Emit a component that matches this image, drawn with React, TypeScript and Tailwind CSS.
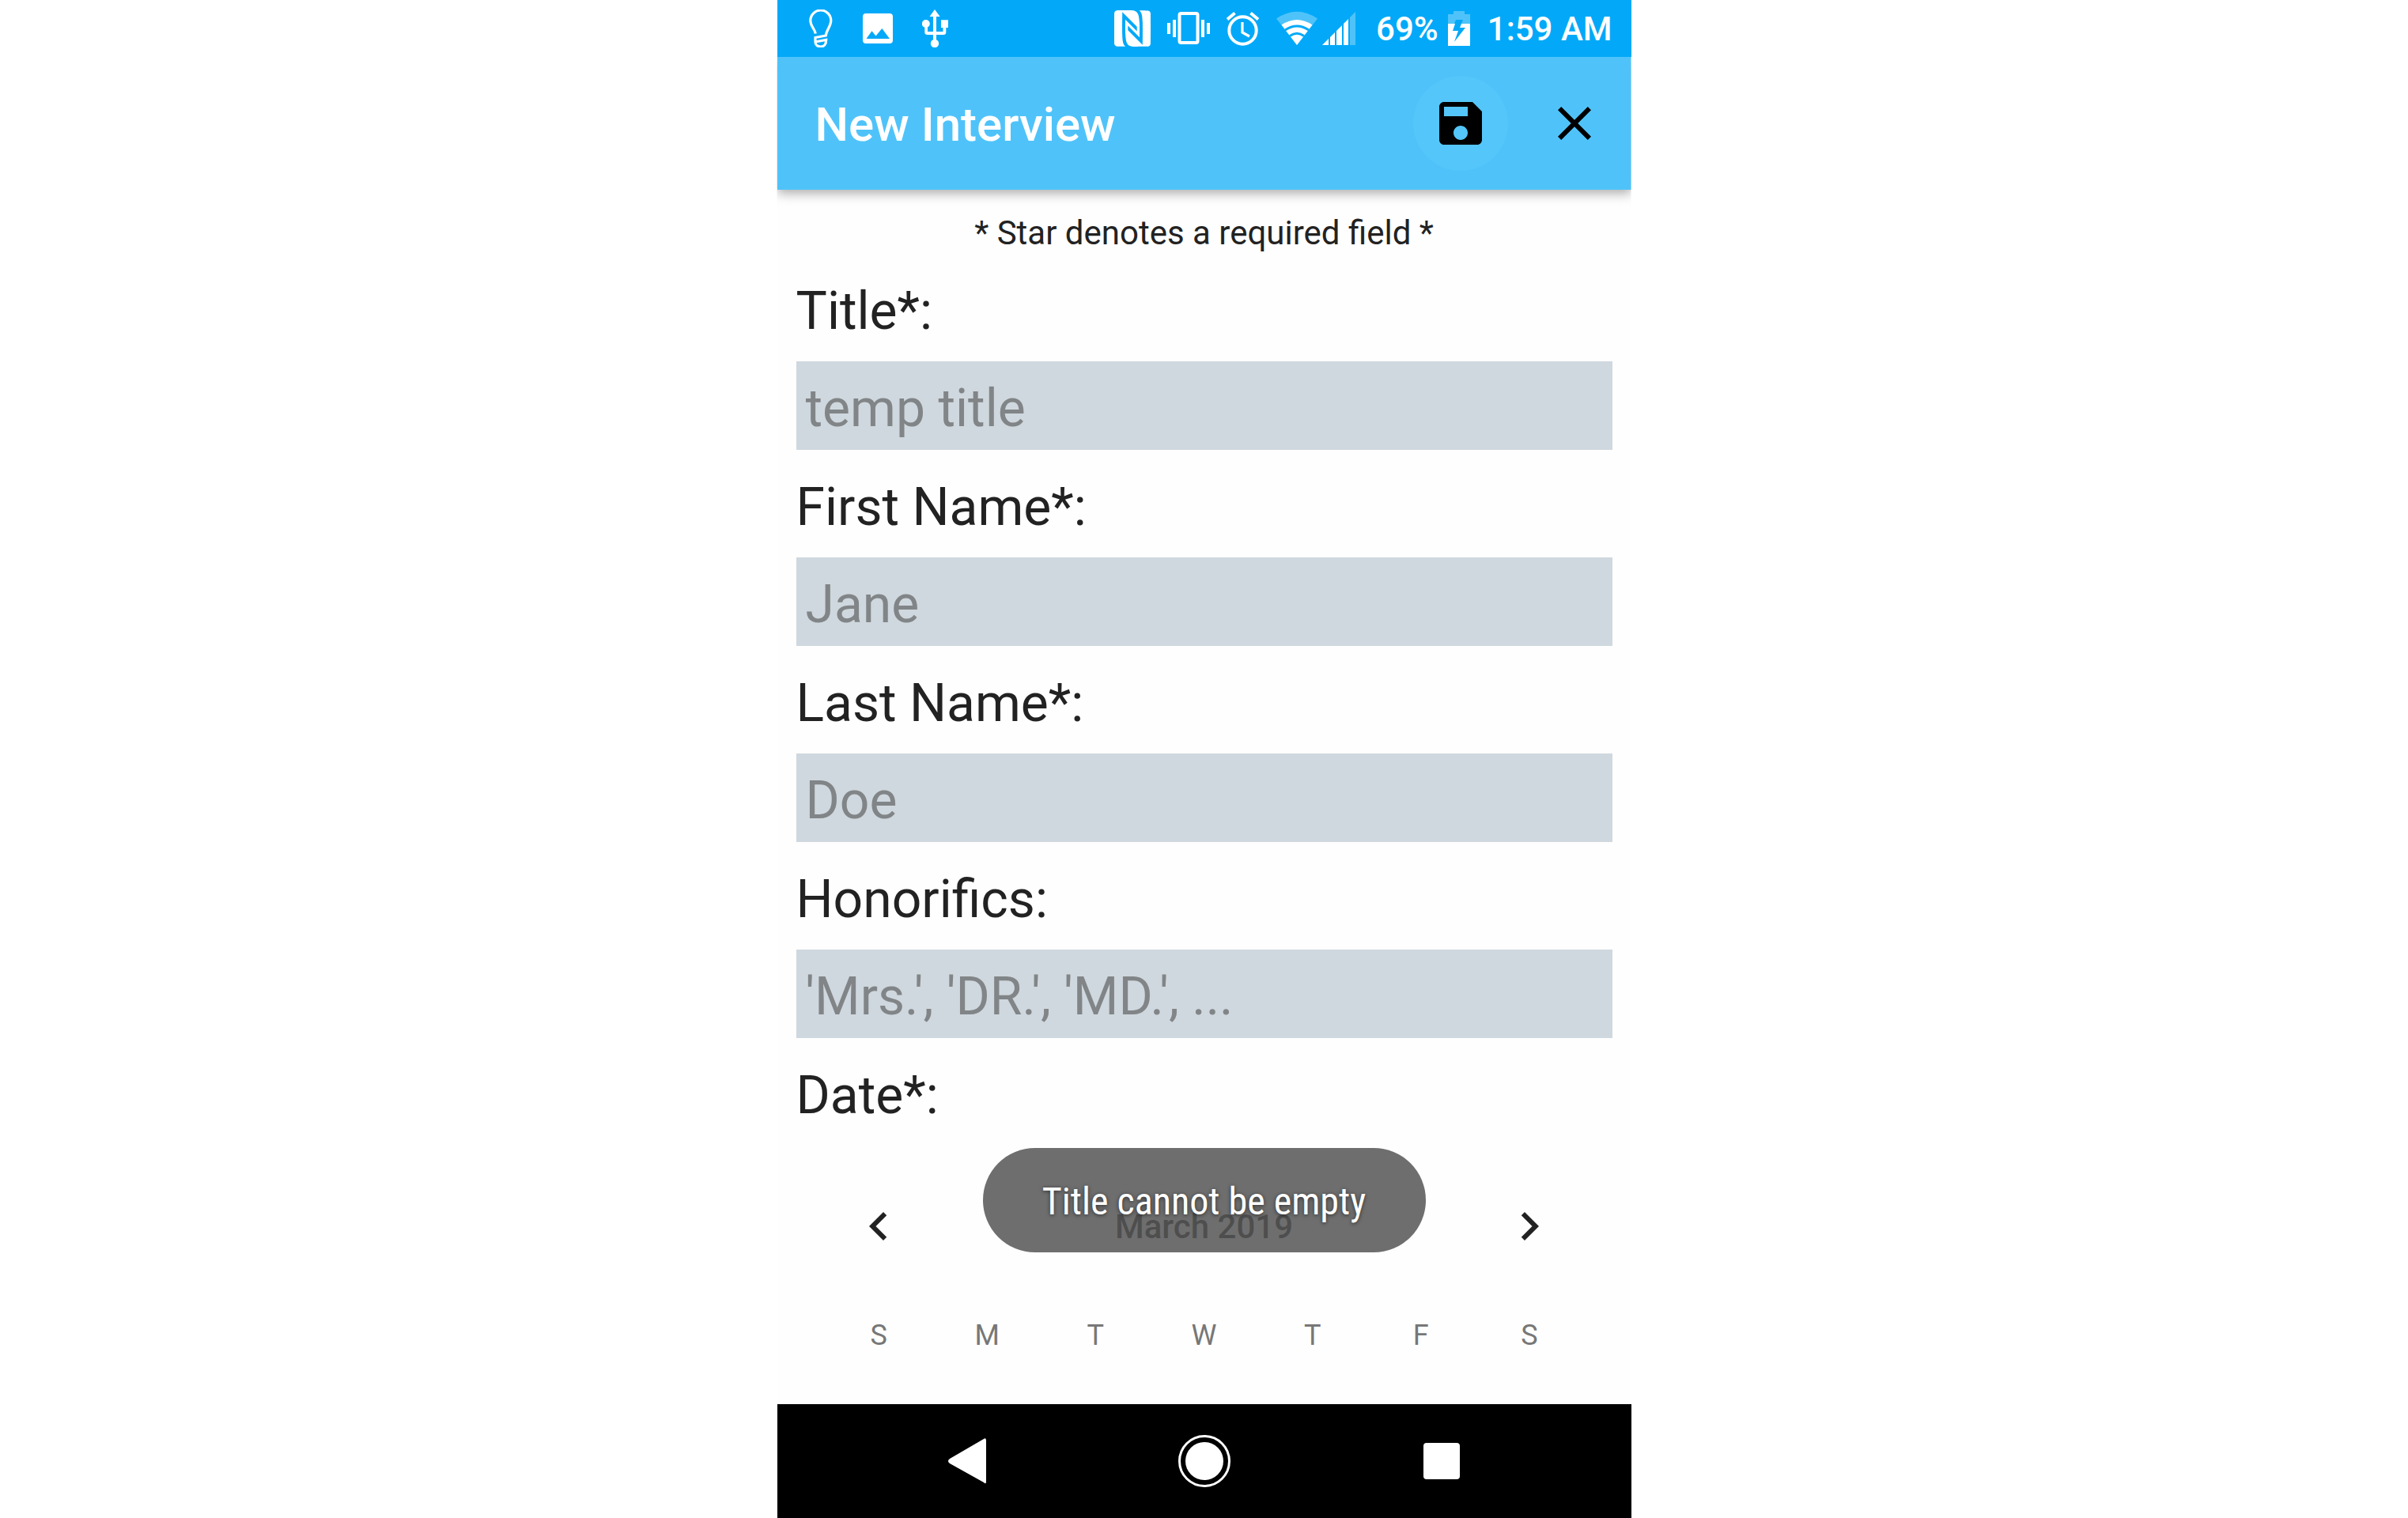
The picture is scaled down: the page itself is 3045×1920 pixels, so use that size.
import { useState } from "react";
import { SiNfc } from "react-icons/si";

const fields = [
  { id: "title", label: "Title*:", hint: "temp title" },
  { id: "first", label: "First Name*:", hint: "Jane" },
  { id: "last", label: "Last Name*:", hint: "Doe" },
  { id: "honorifics", label: "Honorifics:", hint: "'Mrs.', 'DR.', 'MD.', ..." },
];
const weekdays = ["S", "M", "T", "W", "T", "F", "S"];

function Status() {
  return (
    <div className="flex h-[72px] items-center bg-[#03a9f8] pr-6 pl-10 text-[42px] leading-none font-medium text-white">
      <div className="flex flex-1 gap-9">
        <svg className="h-12 w-[31px]" viewBox="0 0 31 48" fill="none" stroke="currentColor" strokeWidth="3.2">
          <path d="M8.3 30.5C7.5 25 1.8 21 1.8 14A13 13 0 0 1 27.8 14C27.8 21 22 26 21.3 33L8 35.5V41C8 45 11 47 15 47C19 47 21.7 44 21.7 38.5L9 40.8" />
        </svg>
        <svg className="h-12 w-10" viewBox="0 0 40 48" fill="currentColor">
          <path fillRule="evenodd" d="M5 5H35Q39 5 39 9V39Q39 43 35 43H5Q1 43 1 39V9Q1 5 5 5ZM5.5 37H35L25.3 24L17.5 33.5L12.5 27.3Z" />
        </svg>
        <svg className="h-12 w-[34px]" viewBox="0 0 34 48" fill="currentColor">
          <path d="M16 0L22.7 9H18V28H26.5V23H24V13.3H33V23H30.3V29Q30.3 32 27 32H18V40H14V32H7Q3.3 32 3.3 29V20H7V28H14V9H9.5Z" />
          <circle cx="4.8" cy="18" r="5" />
          <circle cx="16" cy="43" r="5.2" />
        </svg>
      </div>
      <div className="flex items-center gap-[21px]">
        <SiNfc className="size-[46px]" />
        <svg className="h-12 w-[54px]" viewBox="0 0 54 48" fill="currentColor">
          <path d="M0 17H4V31H0ZM7 13H11V35H7ZM43 13H47V35H43ZM50 17H54V31H50Z" />
          <rect x="15.5" y="5" width="23" height="37" rx="2" fill="none" stroke="currentColor" strokeWidth="4" />
        </svg>
        <svg className="h-12 w-[42px]" viewBox="0 0 42 48" fill="none" stroke="currentColor" strokeWidth="4">
          <circle cx="20.5" cy="26.5" r="17.2" />
          <path d="M1 12.5L10.5 4.5M40 12.5L30.5 4.5" />
          <path d="M20 16V29L29 34" strokeWidth="3.2" />
        </svg>
        <div className="flex gap-1.5">
          <svg className="h-12 w-[52px]" viewBox="0 0 52 48" fill="currentColor">
            <path fill="#4fc3f9" d="M0 11.5Q26-6 52 11.5L26 45Z" />
            <path d="M6.5 19.5Q26 6.5 45.5 19.5L26 45Z" />
            <path d="M11 26Q26 16 41 26M17 33.5Q26 27 35 33.5" fill="none" stroke="#03a9f8" strokeWidth="3" />
          </svg>
          <svg className="h-12 w-[42px]" viewBox="0 0 42 48" fill="currentColor">
            <path fill="#4fc3f9" d="M35 10L42 3V45H35Z" />
            <path d="M0 45L8 37V45ZM10 35L16 29V45H10ZM18 27L25 20V45H18ZM27 18L33 12V45H27Z" />
          </svg>
        </div>
      </div>
      <span className="ml-[26px] pt-0.5">69%</span>
      <svg className="mr-[22px] ml-3 h-12 w-7" viewBox="0 0 28 48" fill="currentColor">
        <path fill="#4fc3f9" d="M7 2H21V6H28V18H17L19 13H10L8 18H0V6H7Z" />
        <path d="M0 18H9L6 27H13L8 41L22 23H15L17 18H28V46H0Z" />
      </svg>
      <span className="pt-0.5">1:59 AM</span>
    </div>
  );
}

export default function App() {
  const [values, setValues] = useState<Record<string, string>>({});
  return (
    <div className="flex min-h-screen justify-center bg-white font-['Roboto',sans-serif] text-[#222]">
      <div className="relative flex w-full max-w-[1080px] flex-col bg-[#fefefe]">
        <Status />
        <header className="flex h-[168px] items-center bg-[#4fc3f9] pl-12 shadow-[0_4px_14px_rgba(0,0,0,0.35)] [clip-path:inset(0_0_-20px_0)]">
          <h1 className="flex-1 pt-1 text-[60px] leading-[72px] font-medium text-white">New Interview</h1>
          <button aria-label="Save" className="mx-3 flex size-[120px] items-center justify-center rounded-full bg-[#54c6f9] text-black">
            <svg className="size-[72px]" viewBox="0 0 24 24" fill="currentColor">
              <path d="M17 3H5c-1.11 0-2 .9-2 2v14c0 1.1.89 2 2 2h14c1.1 0 2-.9 2-2V7l-4-4zm-5 16c-1.66 0-3-1.34-3-3s1.34-3 3-3 3 1.34 3 3-1.34 3-3 3zm3-10H5V5h10v4z" />
            </svg>
          </button>
          <button aria-label="Close" className="mx-3 flex size-[120px] items-center justify-center text-black">
            <svg className="size-[72px]" viewBox="0 0 24 24" fill="currentColor">
              <path d="M19 6.41L17.59 5 12 10.59 6.41 5 5 6.41 10.59 12 5 17.59 6.41 19 12 13.41 17.59 19 19 17.59 13.41 12z" />
            </svg>
          </button>
        </header>
        <main className="flex-1">
          <form className="px-6 pt-[25px]">
            <p className="text-center text-[42px] leading-[60px]">* Star denotes a required field *</p>
            {fields.map((f) => (
              <div key={f.id} className="pb-1">
                <label htmlFor={f.id} className="block pt-[25px] pb-[19px] text-[66px] leading-[88px]">
                  {f.label}
                </label>
                <input
                  id={f.id}
                  value={values[f.id] ?? ""}
                  onChange={(e) => setValues({ ...values, [f.id]: e.target.value })}
                  placeholder={f.hint}
                  className="block h-28 w-full bg-[#cfd8de] px-3 pt-1.5 text-[66px] outline-none placeholder:text-[#818587]"
                />
              </div>
            ))}
            <p className="pt-[25px] text-[66px] leading-[88px]">Date*:</p>
          </form>
          <section aria-label="Calendar" className="mt-12 px-15">
            <div className="flex h-[146px] items-center justify-between">
              <button type="button" aria-label="Previous month" className="flex w-[137px] justify-center">
                <svg className="size-[72px]" viewBox="0 0 24 24" fill="currentColor">
                  <path d="M15.41 7.41L14 6l-6 6 6 6 1.41-1.41L10.83 12z" />
                </svg>
              </button>
              <h2 className="text-[42px] font-medium">March 2019</h2>
              <button type="button" aria-label="Next month" className="flex w-[137px] justify-center">
                <svg className="size-[72px]" viewBox="0 0 24 24" fill="currentColor">
                  <path d="M10 6L8.59 7.41 13.17 12l-4.58 4.59L10 18l6-6z" />
                </svg>
              </button>
            </div>
            <div className="grid h-[130px] grid-cols-7 items-center text-center text-[36px] text-[#777]">
              {weekdays.map((d, i) => (
                <span key={i}>{d}</span>
              ))}
            </div>
          </section>
        </main>
        <div role="alert" className="absolute bottom-[336px] left-1/2 flex h-[132px] w-[560px] -translate-x-1/2 items-center justify-center rounded-full bg-[#565656]/86 pt-1 font-['Roboto_Condensed','Roboto',sans-serif] text-[48px] whitespace-nowrap text-white [text-shadow:0_1px_5px_rgba(0,0,0,0.6)]">
          Title cannot be empty
        </div>
        <nav className="flex h-36 items-center justify-center bg-black text-white">
          <button aria-label="Back" className="flex w-[300px] justify-center">
            <svg className="h-[66px] w-[66px]" viewBox="0 0 66 66" fill="currentColor">
              <path d="M54 5Q57 3 57 7V59Q57 63 54 60L11 36Q7 33 11 30Z" />
            </svg>
          </button>
          <button aria-label="Home" className="flex w-[300px] justify-center">
            <svg className="h-[66px] w-[66px]" viewBox="0 0 66 66" fill="currentColor">
              <circle cx="33" cy="33" r="31.5" fill="none" stroke="currentColor" strokeWidth="3" />
              <circle cx="33" cy="33" r="24" />
            </svg>
          </button>
          <button aria-label="Recent apps" className="flex w-[300px] justify-center">
            <svg className="h-[66px] w-[66px]" viewBox="0 0 66 66" fill="currentColor">
              <rect x="10" y="10" width="46" height="46" rx="4" />
            </svg>
          </button>
        </nav>
      </div>
    </div>
  );
}
